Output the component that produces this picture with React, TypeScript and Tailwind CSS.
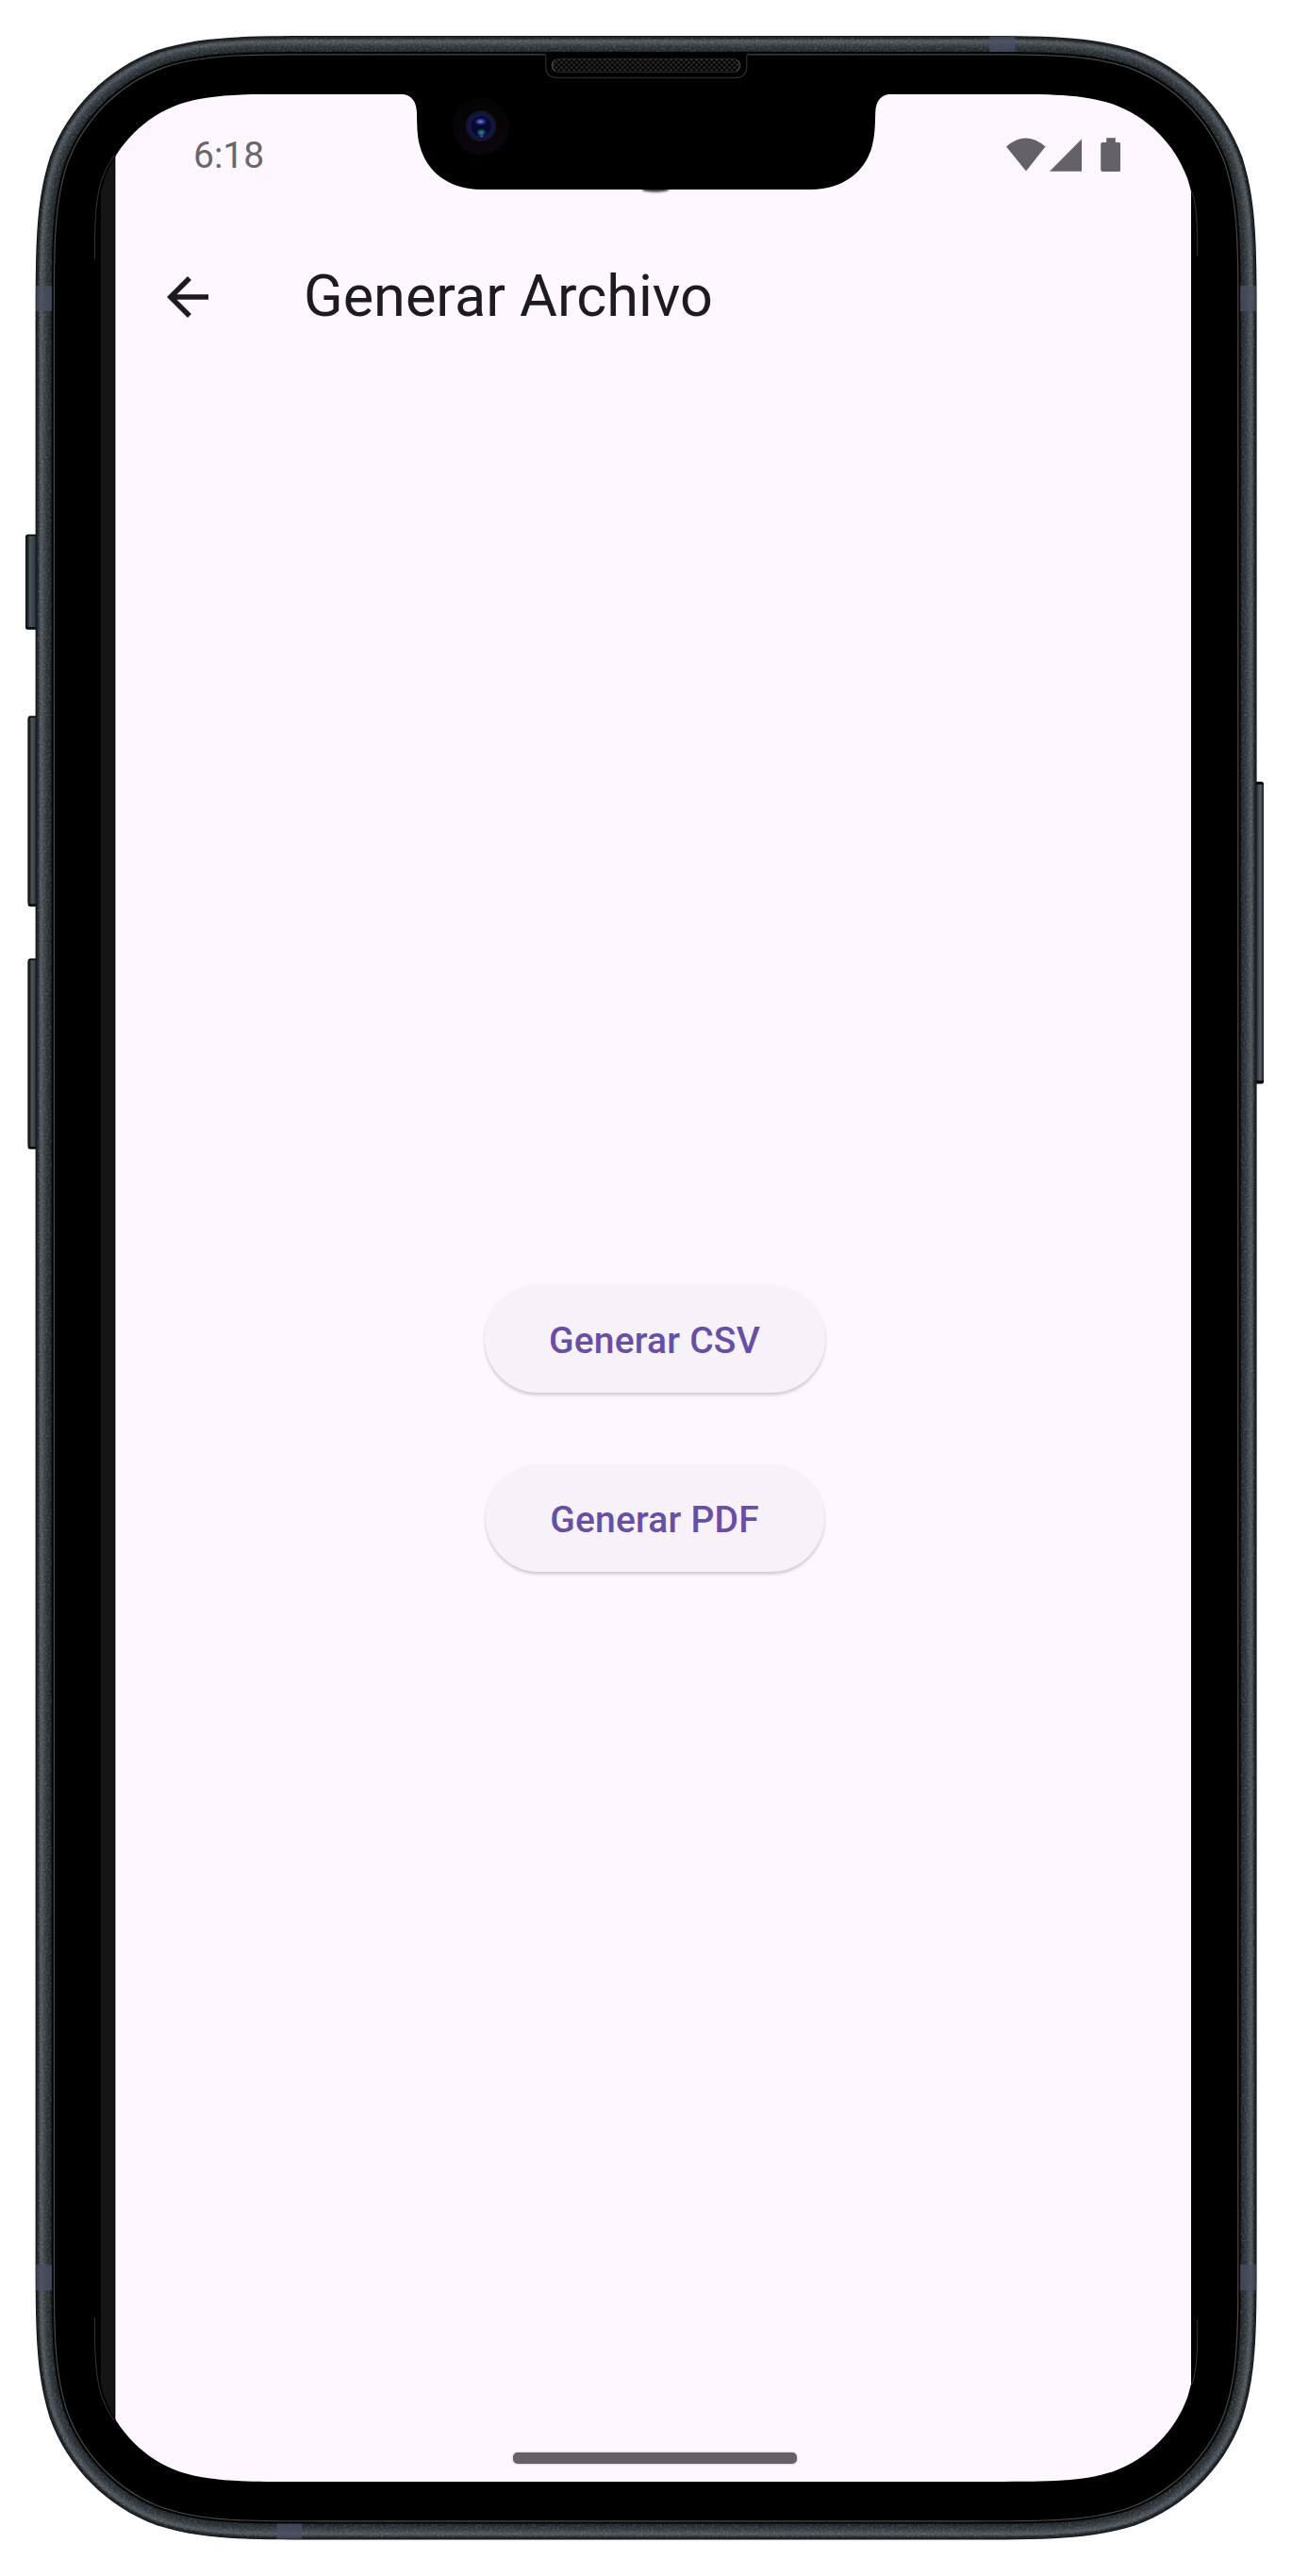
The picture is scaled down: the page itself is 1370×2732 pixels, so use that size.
import React from "react";

/** Closed outline with continuous-curvature corners of radius r. */
function squircle(x0: number, y0: number, x1: number, y1: number, r: number): string {
  const corner = (cx: number, cy: number, sx: number, sy: number, reverse: boolean) => {
    const pts: [number, number][] = [
      [1.528665, 0],
      [1.08849296, 0],
      [0.86840694, 0],
      [0.63149379, 0.07491139],
      [0.37282383, 0.16905956],
      [0.16905956, 0.37282383],
      [0.07491139, 0.63149379],
      [0, 0.86840694],
      [0, 1.08849296],
      [0, 1.528665],
    ];
    const list = (reverse ? [...pts].reverse() : pts).map(
      ([a, b]) => `${(cx + sx * a * r).toFixed(2)} ${(cy + sy * b * r).toFixed(2)}`,
    );
    return `${list[0]} C${list.slice(1, 4).join(" ")} C${list.slice(4, 7).join(" ")} C${list
      .slice(7, 10)
      .join(" ")}`;
  };
  return `M${corner(x0, y0, 1, 1, true)} L${corner(x1, y0, -1, 1, false)} L${corner(
    x1,
    y1,
    -1,
    -1,
    true,
  )} L${corner(x0, y1, 1, -1, false)} Z`;
}

const BODY = { x0: 37.6, y0: 38, x1: 1332.6, y1: 2693.6, r: 204 };
const inset = (d: number) =>
  squircle(BODY.x0 + d, BODY.y0 + d, BODY.x1 - d, BODY.y1 - d, BODY.r - d);

const RIM: [number, string][] = [
  [0, "#12171b"],
  [1, "#20262b"],
  [2, "#191e23"],
  [3, "#30363b"],
  [4, "#42494e"],
  [5, "#4d5358"],
  [6, "#4d5459"],
  [7, "#495055"],
  [8, "#41484d"],
  [9, "#3a4146"],
  [10, "#343b40"],
  [11, "#2f363b"],
  [12, "#2b3237"],
  [13, "#283034"],
  [14, "#252c31"],
  [15, "#22292e"],
  [16, "#1b2125"],
  [17, "#050607"],
  [19.2, "#4a4846"],
  [20.4, "#000000"],
];

const SCREEN = squircle(100.4, 99.8, 1269.9, 2632, 142);
const NOTCH =
  "M424 99.8 C436 99.8 441.6 107 442 120 C442.3 140 443 146 445 154 C452 182 476 200.9 510 200.9 L860 200.9 C894 200.9 918 182 925 154 C927 146 927.8 140 928.2 120 C928.6 107 934 99.8 946 99.8 L946 90 L424 90 Z";

function Chassis() {
  return (
    <svg className="absolute inset-0" width="1370" height="2732" viewBox="0 0 1370 2732" aria-hidden="true">
      <defs>
        <linearGradient id="keyL" x1="0" x2="1" y1="0" y2="0">
          <stop offset="0" stopColor="#0b1013" />
          <stop offset="0.16" stopColor="#1b2226" />
          <stop offset="0.34" stopColor="#4b5459" />
          <stop offset="0.7" stopColor="#353d43" />
          <stop offset="1" stopColor="#1a2024" />
        </linearGradient>
        <linearGradient id="keyR" x1="1" x2="0" y1="0" y2="0">
          <stop offset="0" stopColor="#1a1f25" />
          <stop offset="0.3" stopColor="#565d66" />
          <stop offset="0.6" stopColor="#30373d" />
          <stop offset="1" stopColor="#14191d" />
        </linearGradient>
        <filter id="grain" x="0" y="0" width="100%" height="100%">
          <feTurbulence type="fractalNoise" baseFrequency="0.45" numOctaves="2" seed="4" />
          <feColorMatrix values="0 0 0 0 0.6  0 0 0 0 0.65  0 0 0 0 0.7  1.6 0 0 0 -0.68" />
        </filter>
        <clipPath id="rimClip">
          <path d={`${inset(2)} ${inset(17)}`} clipRule="evenodd" />
        </clipPath>
      </defs>
      {[
        [27, 566.8, 14, 101],
        [29.6, 759.3, 12, 202.2],
        [29.6, 1016.5, 12, 202.2],
      ].map(([x, y, w, h]) => (
        <g key={y}>
          <rect x={x} y={y} width={w} height={h} rx="2.5" fill="#070b0e" />
          <rect x={x} y={y + 1.8} width={w} height={h - 4.5} rx="2" fill="url(#keyL)" />
        </g>
      ))}
      <rect x="1328" y="829" width="12" height="320.5" rx="2.5" fill="#05080b" />
      <rect x="1328" y="832" width="12" height="314" rx="2" fill="url(#keyR)" />
      {RIM.map(([d, fill]) => (
        <path key={d} d={inset(d)} fill={fill} />
      ))}
      <g clipPath="url(#rimClip)">
        <rect width="1370" height="2732" filter="url(#grain)" opacity="0.3" />
      </g>
      <g fill="#4b5063" fillOpacity="0.72">
        <rect x="38.3" y="303" width="16.7" height="27" />
        <rect x="1315" y="303" width="16.8" height="27" />
        <rect x="38.3" y="2401.7" width="16.7" height="27.3" />
        <rect x="1315" y="2401.7" width="16.8" height="27.3" />
        <rect x="1049.3" y="38.5" width="27" height="16.5" />
        <rect x="293.5" y="2676.6" width="26.7" height="16" />
      </g>
    </svg>
  );
}

function Bezel() {
  return (
    <svg className="absolute inset-0" width="1370" height="2732" viewBox="0 0 1370 2732" aria-hidden="true">
      <defs>
        <pattern id="mesh" width="5.4" height="5.4" patternUnits="userSpaceOnUse">
          <rect width="5.4" height="5.4" fill="#060606" />
          <circle cx="1.35" cy="1.35" r="1.1" fill="#3a3a3a" />
          <circle cx="4.05" cy="4.05" r="1.1" fill="#3a3a3a" />
        </pattern>
        <linearGradient id="lensHalo" x1="0" x2="0" y1="0" y2="1">
          <stop offset="0" stopColor="#040404" />
          <stop offset="1" stopColor="#0c050d" />
        </linearGradient>
        <radialGradient id="lensTop">
          <stop offset="0" stopColor="#7f88e0" />
          <stop offset="0.45" stopColor="#333a94" />
          <stop offset="1" stopColor="#12155a" stopOpacity="0" />
        </radialGradient>
        <radialGradient id="lensBottom">
          <stop offset="0" stopColor="#2a8a80" />
          <stop offset="0.5" stopColor="#154c60" />
          <stop offset="1" stopColor="#0a1050" stopOpacity="0" />
        </radialGradient>
        <filter id="soft" x="-20%" y="-50%" width="140%" height="200%">
          <feGaussianBlur stdDeviation="0.8" />
        </filter>
      </defs>
      <path d={`${inset(21)} ${SCREEN}`} fillRule="evenodd" fill="#000000" />
      <g fill="none" stroke="#8a8a8a" strokeWidth="0.4">
        <path d="M100.4 275 C100.4 240 100.8 212 108 190 Q113 176 121 165" />
        <path d="M100.4 2458 C100.4 2492 100.8 2520 108 2542 Q113 2556 121 2567" />
        <path d="M1269.8 272 C1269.8 240 1269 215 1263.4 203" />
        <path d="M1269.8 2460 C1269.8 2492 1269 2517 1263.4 2529" />
      </g>
      <path d="M681 198 h28 v3.4 q-3 2 -14 2.4 q-11 -0.4 -14 -2.4 Z" fill="#3c3940" filter="url(#soft)" />
      <path d={NOTCH} fill="#000000" />
      <path d="M576.2 57.2 q2.5 0.5 2.5 3 V70 q0 12.5 12.5 12.5 H779.3 q12.5 0 12.5 -12.5 V60 q0 -2.5 2.5 -3" fill="#000000" stroke="#282828" strokeWidth="1.4" />
      <rect x="580.2" y="55.5" width="210" height="4" fill="#000000" />
      <rect x="585" y="62.3" width="200" height="14.4" rx="7.2" fill="url(#mesh)" stroke="#262626" strokeWidth="1" />
      <path d="M589 63.5 a7 7 0 0 0 0 12 M781 63.5 a7 7 0 0 1 0 12" fill="none" stroke="#5a5a5a" strokeWidth="1" />
      <ellipse cx="510" cy="133.8" rx="30" ry="30.3" fill="url(#lensHalo)" />
      <circle cx="510" cy="133.8" r="16.2" fill="#14162a" />
      <circle cx="510" cy="133.8" r="11.6" fill="#07082a" stroke="#14186a" strokeWidth="1.4" />
      <ellipse cx="509.6" cy="129" rx="7.6" ry="4.6" fill="url(#lensTop)" />
      <ellipse cx="510.4" cy="140.6" rx="6" ry="5" fill="url(#lensBottom)" />
      <circle cx="510.6" cy="144.2" r="1.2" fill="#8a35b0" />
    </svg>
  );
}

function StatusBar() {
  return (
    <div className="flex h-[130px] items-start justify-between pl-[82px] pr-[75px]">
      <span className="mt-[43px] text-[39px] leading-[44px] text-[#6a676c]">6:18</span>
      <svg className="mt-[46px]" width="122" height="37" viewBox="1066 146 122 37" fill="#656267">
        <path d="M1067 155.5 Q1087.5 137.5 1108.5 155.5 L1088 181.5 Z" />
        <path d="M1147 147.5 V181.7 H1113 Z" />
        <path d="M1173.2 146.3 h9.6 v4.6 h3.4 q2 0 2 2 v27 q0 2 -2 2 h-17 q-2 0 -2 -2 v-27 q0 -2 2 -2 h4 Z" />
      </svg>
    </div>
  );
}

function FileButton({ children, className }: { children: string; className: string }) {
  return (
    <button
      className={`h-[113px] rounded-full bg-[#f7f2fa] text-[39px] leading-[46px] font-medium tracking-[0.2px] text-[#6750a4] shadow-[0_3px_3px_0_rgba(0,0,0,0.13),0_1px_4px_0_rgba(0,0,0,0.08)] ${className}`}
    >
      {children}
    </button>
  );
}

export default function App() {
  return (
    <main className="relative h-[2732px] w-[1370px] overflow-hidden bg-white pt-[100px] pl-[100px] font-[Roboto,sans-serif]">
      <Chassis />
      <div className="relative flex h-[2532px] w-[1170px] overflow-hidden rounded-[110px] bg-black pl-[7px]">
        <div className="w-[13.5px] bg-[#151515]" />
        <div className="w-[1.5px] bg-black" />
        <section className="flex w-[1141px] flex-col border-l border-[#aaa5ad] bg-[#fef7ff]">
          <StatusBar />
          <header className="flex h-[168px] items-center pl-[43px]">
            <svg className="mt-[1px] size-[66px]" viewBox="0 0 24 24" fill="#1d1b20">
              <path d="M20 11H7.83l5.59-5.59L12 4l-8 8 8 8 1.41-1.41L7.83 13H20v-2z" />
            </svg>
            <h1 className="ml-[90px] text-[61.2px] leading-[72px] text-[#1d1b20]">Generar Archivo</h1>
          </header>
          <div className="flex grow flex-col items-center gap-[76.5px] pt-[966px] pl-[2px]">
            <FileButton className="w-[361px] pt-[2px]">Generar CSV</FileButton>
            <FileButton className="w-[359px] pt-[3px]">Generar PDF</FileButton>
          </div>
          <div className="mb-[19px] flex justify-center pl-[3px]">
            <div className="h-[12px] w-[301px] rounded-[5px] bg-[#656166] shadow-[0_0_2px_rgba(101,97,102,0.6)]" />
          </div>
        </section>
      </div>
      <Bezel />
    </main>
  );
}
